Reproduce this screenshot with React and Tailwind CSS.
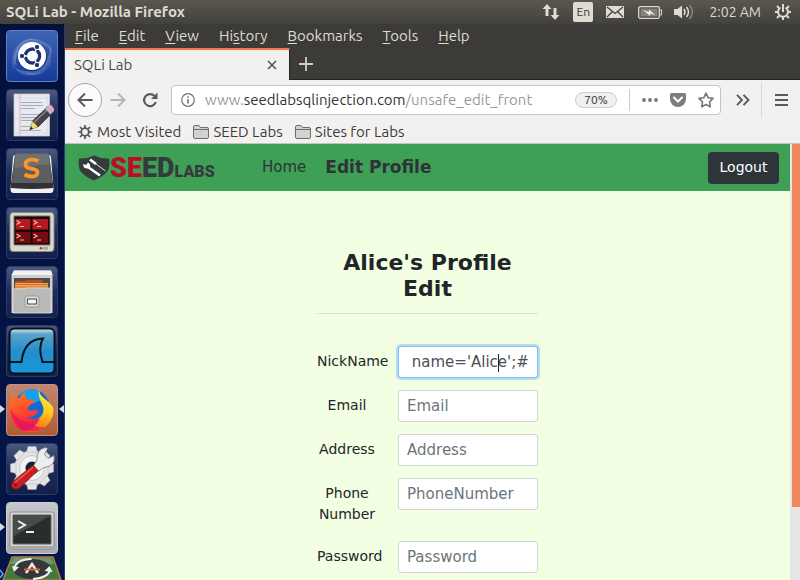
import React from "react";

const UI = "font-['Ubuntu','Noto_Sans','Open_Sans',sans-serif]";
const PAGE = "font-['DejaVu_Sans',sans-serif]";

function Tile({ label, className, children, marks }) {
  return (
    <button
      type="button"
      aria-label={label}
      className={`relative h-[52px] w-[52px] shrink-0 rounded-[4px] border ${className}`}
    >
      <svg viewBox="1 1 50 50" className="block h-[50px] w-[50px] rounded-[3px]">
        {children}
      </svg>
      {marks?.includes("l") && (
        <span className="absolute top-5 -left-[7px] border-y-[4px] border-l-[5px] border-y-transparent border-l-[#d9d9dd]" />
      )}
      {marks?.includes("r") && (
        <span className="absolute top-5 -right-[7px] border-y-[4px] border-r-[5px] border-y-transparent border-r-[#d9d9dd]" />
      )}
    </button>
  );
}

const NAVY = "border-[#2b3a68] bg-linear-to-b from-[#4b587f] via-[#1d2b57] to-[#13204b]";

function Launcher() {
  return (
    <nav
      aria-label="Launcher"
      className="flex w-[65px] shrink-0 flex-col gap-[7px] overflow-hidden border-r border-[#23407c] bg-linear-to-b from-[#04113a] to-[#03154a] pt-[6px] pl-[6px]"
    >
      <Tile label="Search your computer" className="border-[#5c80cc] bg-linear-to-b from-[#3f64b4] to-[#16399a]">
        <path d="M8 39C2 24 12 6 30 9c9 1 16 8 17 15C42 14 29 10 20 16 12 21 9 29 8 39Z" fill="#fff" opacity=".17" />
        <path d="M43 12c6 12 0 31-16 33-9 2-16-3-19-8 9 6 22 6 29-2 6-7 8-14 6-23Z" fill="#fff" opacity=".19" />
        <path d="M10 35C6 20 17 9 27 9M45 30C42 42 32 47 21 43" fill="none" stroke="#c6d6ff" strokeWidth="1" opacity=".3" />
        <circle cx="26.500" cy="27" r="14.500" fill="#0a1d50" opacity=".5" />
        <circle cx="26" cy="26" r="14" fill="#fff" />
        <circle cx="26.500" cy="26" r="7" fill="none" stroke="#20366c" strokeWidth="3.600" />
        <path d="M26.500 26 15 26M26.500 26 32.500 15.500M26.500 26 32.500 36.500" stroke="#fff" strokeWidth="1.500" />
        <circle cx="26.500" cy="26" r="5.300" fill="#fff" />
        {[[16, 26], [31, 17], [31, 35]].map(([x, y]) => (
          <circle key={`${x}-${y}`} cx={x} cy={y} r="2.700" fill="#20366c" stroke="#fff" strokeWidth="1" />
        ))}
      </Tile>

      <Tile label="Text Editor" className={NAVY}>
        <path d="M8 5h35.500v42H8z" fill="#e9eaf1" stroke="#c2c4ce" strokeWidth=".8" />
        <path d="M14 5v42" stroke="#f19a9a" strokeWidth=".8" />
        <path d="M41 5v42M9 9h34M9 30h34M9 44h34" stroke="#c8d2ef" strokeWidth=".7" />
        <path d="M15 13.500h21M15 16.500h22M15 19.500h14M15 25.500h19M15 28.500h16M15 31.500h12M15 37.500h10M15 41.500h20" stroke="#a2a4ac" strokeWidth=".9" />
        <path d="M26.500 32 40.500 19l5 5.500L32 38Z" fill="#454547" stroke="#1b1b1c" strokeWidth=".7" />
        <path d="m28.500 33 13-12.500" stroke="#838386" strokeWidth="1.500" />
        <path d="m26.500 32 5.500 6-8 2.500Z" fill="#f0dc70" stroke="#7b6b2a" strokeWidth=".5" />
        <path d="m25 37.500 2 2.300-3.800 1.400Z" fill="#222" />
        <path d="m39 20 3-3 5.500 5.500-3 3Z" fill="#babac3" stroke="#6b6b72" strokeWidth=".5" />
        <path d="m41.500 17 1.500-1.500q3 0 5 4.500v1.500L46.500 23Z" fill="#eaa0c8" />
      </Tile>

      <Tile label="Sublime Text" className={NAVY}>
        <path d="M7 9q.500-2 2-2h34q1.500 0 2 2l2.500 32q0 4-3 4h-37q-3 0-3-4Z" fill="#f1f1f1" />
        <path d="M9 7q.500-2 3-2h28q2.500 0 3 2l4 29v4q-21 2-42 0v-4Z" fill="#303132" />
        <path d="M9 7q.500-2 3-2h28q2.500 0 3 2l3 26H6Z" fill="#5c5e5f" />
        <path d="M9.500 6h33l1 10-35 4Z" fill="#85878a" opacity=".45" />
        <path d="M6 34h40" stroke="#8b8d8e" strokeWidth="1" />
        <path d="M32.500 13q-4-1.800-8-1.300-5 .9-5 4.700 0 3.300 6 4.300 6.500 1 6 4.300-.5 3.500-5.500 3.500-4 0-7.500-2" fill="none" stroke="#ff9528" strokeWidth="3.800" />
      </Tile>

      <Tile label="Terminator" className={NAVY}>
        <path d="M7 5.500h38q2.500 0 3 3V41q0 3.500-3 3.500H7Q4 44.500 4 41V8.500q.500-3 3-3Z" fill="#d8d8d0" stroke="#8b8b86" />
        <path d="M8 9h36v29H8Z" fill="#1b0605" stroke="#777770" strokeWidth="1" />
        <path d="M9.500 12h15v10.500h-15ZM26.500 12H42v10.500H26.500Z" fill="#b51a1f" />
        <path d="M9.500 25h15v11h-15ZM26.500 25H42v11H26.500Z" fill="#740b0e" />
        <path d="m10.500 13.500 3.500 2-3.500 2m3.500 2h4m9.500-6 3.500 2-3.500 2m3.500 2h4M10.500 27l3.500 2-3.500 2m3.500 2h4m9.500-6 3.500 2-3.500 2m3.500 2h4" fill="none" stroke="#efb5ae" strokeWidth="1.200" />
        <circle cx="35" cy="41.300" r="1.300" fill="#e12422" />
        <path d="M37.500 40.300h4v2h-4Z" fill="#b8b8b1" stroke="#8b8b86" strokeWidth=".6" />
      </Tile>

      <Tile label="Files" className={NAVY}>
        <path d="M8 4.500h37L46.500 9v38H5.500V9Z" fill="#cfcfcf" />
        <path d="M8 4.500h37L46.500 9h-41Z" fill="#f1f1f1" />
        <path d="M8 12h36v12H8Z" fill="#4c4c48" />
        <path d="M9.500 15h9l1-1h17v3h-27Z" fill="#b74e20" />
        <path d="M9 17h33v6H9Z" fill="#f0a55b" />
        <path d="M9 18.500h33M9 21h33" stroke="#d86d28" strokeWidth="1" />
        <path d="M7 23h11l2-1h25v25H7Z" fill="#b9b9b8" stroke="#dedede" strokeWidth=".8" />
        <rect x="19" y="30" width="14" height="11" rx="2" fill="#d9d9d9" stroke="#888" strokeWidth=".7" />
        <rect x="21.500" y="33" width="9" height="5" fill="#f4f4f4" stroke="#4b4b4b" strokeWidth="1" />
      </Tile>

      <Tile label="Wireshark" className={NAVY}>
        <defs>
          <linearGradient id="sea" x2="0" y2="1">
            <stop offset="0" stopColor="#d3e8f2" /><stop offset=".13" stopColor="#5ba2ca" />
            <stop offset=".5" stopColor="#238fcb" /><stop offset="1" stopColor="#1597dc" />
          </linearGradient>
        </defs>
        <rect x="3.500" y="3.500" width="45" height="45" rx="5" fill="url(#sea)" stroke="#091015" strokeWidth="2" />
        <path d="M4 37h11.500C17 23 24 14 37 13.500 33 20 34 29 36.500 37H48" fill="none" stroke="#07131a" strokeWidth="2" />
      </Tile>

      <Tile label="Firefox" marks="lr" className="border-[#c98d78] bg-linear-to-b from-[#c08774] to-[#ae5c35]">
        <defs>
          <linearGradient id="tail" x1=".6" y1="0" x2=".35" y2="1">
            <stop offset="0" stopColor="#fff13a" /><stop offset=".45" stopColor="#ffcb1f" />
            <stop offset=".75" stopColor="#ff8a17" /><stop offset="1" stopColor="#ff4a2c" />
          </linearGradient>
          <linearGradient id="fox" x1=".2" y1="0" x2=".5" y2="1">
            <stop offset="0" stopColor="#ff7a1c" /><stop offset=".55" stopColor="#ff4632" />
            <stop offset="1" stopColor="#ea1259" />
          </linearGradient>
        </defs>
        <circle cx="26" cy="23" r="17.500" fill="#1769cf" />
        <path d="M15 9q8-7 18-2l2 9-9 4-12-5Z" fill="#1aa0ea" />
        <path d="M33 3.500Q32 10 39 15q4 3 8 8 2 8-4 16-7 9-18 9Q12 48 7 38l17-2q9 0 12-5 3-5 0-11-5-9-3-16.500Z" fill="url(#tail)" />
        <path d="M7 9q0 4 3 5 2 0 4-.500Q16 10 19 8.500q-.500 4 2 7 5-.500 8 1.500-1 2.500-5 4-2 2-3 4.500 4 2 8 .500 3 0 3 2-4 6-11 5 6 4 13 1-4 9-13 13-10 0-15-10Q1 25 5 16q0-4 2-7Z" fill="url(#fox)" />
        <path d="M4.500 25q1 14 12.500 20 12 5 22-2-9 1-15-4-13-2-19.500-14Z" fill="#e6145c" opacity=".75" />
      </Tile>

      <Tile label="System Settings" className={NAVY}>
        <g fill="#e4e4e4" stroke="#b0b0b2" strokeWidth=".5">
          <circle cx="26" cy="25" r="17.500" />
          {[0, 45, 90, 135, 180, 225, 270, 315].map((a) => (
            <path key={a} d="M20.500 9 22 3.500h8L31.500 9Z" transform={`rotate(${a} 26 25)`} />
          ))}
        </g>
        <circle cx="26" cy="25" r="12.500" fill="#f2f2f2" stroke="#bbb" strokeWidth=".8" />
        <circle cx="26" cy="25" r="6.500" fill="#14203d" />
        <path d="M31 17q-1-11 9-12.500l1.500 1-3 6 3.500 4 6-3q2 11-10 12l-6 4-5-5Z" fill="#eceded" stroke="#77797d" strokeWidth=".8" />
        <path d="m27 22 5 5.500-19 18q-4 2-7-1-2-3 1-6Z" fill="#c82022" stroke="#7c1012" strokeWidth=".7" />
        <path d="M9 39.500 27 24.500" stroke="#ea5b56" strokeWidth="1.500" />
        <circle cx="9.500" cy="42" r="1.300" fill="#641012" />
      </Tile>

      <Tile label="Terminal" marks="l" className="border-[#d0d0d4] bg-linear-to-b from-[#c6c6cc] to-[#a8a8ae]">
        <rect x="4" y="10" width="44" height="37" rx="2" fill="#d4d4d2" stroke="#8b8b8c" />
        <path d="M4 44h44v3H4Z" fill="#a9a9a8" />
        <path d="M7 13h38v29H7Z" fill="#292e2d" stroke="#666" />
        <path d="M8 14h36L8 34Z" fill="#59605e" opacity=".6" />
        <path d="m12 19 7 4-7 4m8 3h8" fill="none" stroke="#eee" strokeWidth="2" />
      </Tile>

      <button type="button" aria-label="Software Updater" className="relative -mt-[5px] -ml-[6px] h-6 w-16 shrink-0">
        <svg viewBox="0 0 64 24" className="block h-6 w-16">
          <path d="M12 1h41l8 23H3Z" fill="#3f7a38" stroke="#b5794b" strokeWidth="1.500" />
          <path d="M14 2h37l3 6H10Z" fill="#83a578" opacity=".7" />
          <ellipse cx="32" cy="13" rx="19" ry="10" fill="#343838" />
          <path d="M14.500 12q2-8.500 17-9M50 14q-2 8-17 9" fill="none" stroke="#f1f1ee" strokeWidth="2" />
          <path d="m12 10 7 1-5 5ZM52.500 16l-8-1 5-5Z" fill="#f1f1ee" />
          <path d="m26 17 6-9 6 9" fill="none" stroke="#e8e8e6" strokeWidth="2.600" />
          <path d="M24 13.500h16" stroke="#e76b2e" strokeWidth="1.800" />
          <path d="m0 14 3 4-3 4" fill="none" stroke="#55aee8" strokeWidth="1.500" />
        </svg>
      </button>
    </nav>
  );
}

function TopPanel() {
  return (
    <header className="flex h-6 shrink-0 items-center justify-between bg-linear-to-b from-[#5b574d] to-[#42413c] pr-2 pl-[6px] text-[#dfdbd2]">
      <h1 className="text-[15px] leading-6 font-bold">SQLi Lab - Mozilla Firefox</h1>
      <div className="flex items-center">
        <svg viewBox="0 0 18 18" className="h-[18px] w-[18px]" fill="currentColor">
          <path d="M5 1 .5 6H3.500v7h3V6h3ZM13 17l4.500-5H14.500V5h-3v7h-3Z" />
        </svg>
        <span className="ml-[13px] flex h-5 w-5 items-center justify-center rounded-[2px] bg-[#dfdbd2] text-[12px] text-[#3c3b37]">En</span>
        <svg viewBox="0 0 18 12" className="ml-[13px] h-3 w-[18px]">
          <path d="M0 0h18v12H0Z" fill="#dfdbd2" />
          <path d="m1 1 8 6.500L17 1M1 11l5.500-5.500M17 11l-5.500-5.500" fill="none" stroke="#45433e" strokeWidth="1.300" />
        </svg>
        <svg viewBox="0 0 24 13" className="ml-[14px] h-[13px] w-6">
          <rect x=".7" y=".7" width="20.600" height="11.600" rx="1.500" fill="none" stroke="#dfdbd2" strokeWidth="1.300" />
          <path d="M2.500 2.500h17v8h-17Z" fill="#858279" />
          <path d="M22 4h1.500v5H22" fill="none" stroke="#dfdbd2" />
          <path d="m5 4 6 2V3.500L17 9l-5-1.500V10Z" fill="#f2eee5" />
        </svg>
        <svg viewBox="0 0 20 16" className="ml-[12px] h-4 w-5">
          <path d="M0 5h3.500L8 1.500v13L3.500 11H0Z" fill="#dfdbd2" />
          <path d="M10 5q2 3 0 6M12.500 3q4 5 0 10" fill="none" stroke="#dfdbd2" strokeWidth="1.500" />
          <path d="M15.500 1q6 7 0 14" fill="none" stroke="#888579" strokeWidth="1.500" />
        </svg>
        <time className="ml-[15px] text-[14px] leading-6 whitespace-nowrap">2:02 AM</time>
        <svg viewBox="0 0 18 18" className="ml-[13px] h-[18px] w-[18px]" fill="none" stroke="currentColor">
          <path d="M6.500 4.500a5 5 0 1 0 5 0" strokeWidth="2" />
          <path d="M9 1v8" strokeWidth="2" />
          <path d="m3 3 2 2m10-2-2 2M1 9h3m10 0h3M3 15l2-2m10 2-2-2M9 14v3" strokeWidth="2" />
        </svg>
      </div>
    </header>
  );
}

const MENUS = ["File", "Edit", "View", "History", "Bookmarks", "Tools", "Help"];

function MenuBar() {
  return (
    <nav aria-label="Menu bar" className="flex h-6 gap-5 bg-[#3c3b37] pl-[10px] text-[15px] leading-6 text-[#dfdbd2]">
      {MENUS.map((m) => {
        const at = m === "History" ? 2 : 0;
        return (
          <button key={m} type="button">
            {m.slice(0, at)}
            <span className="underline underline-offset-2">{m[at]}</span>
            {m.slice(at + 1)}
          </button>
        );
      })}
    </nav>
  );
}

function TabStrip() {
  return (
    <div className="flex h-8 border-b border-[#252420] bg-[#3c3b37]">
      <div className="-mb-px flex w-[225px] items-center justify-between border-t-2 border-r border-t-[#f07746] border-r-[#252420] bg-[#f2f1f0] pr-3 pl-[9px]">
        <span className="text-[15px] leading-5 text-[#4c4c4c]">SQLi Lab</span>
        <button type="button" aria-label="Close tab">
          <svg viewBox="0 0 10 10" className="h-[10px] w-[10px]"><path d="m1 1 8 8m0-8-8 8" stroke="#555" strokeWidth="1.600" /></svg>
        </button>
      </div>
      <button type="button" aria-label="New tab" className="ml-[9px]">
        <svg viewBox="0 0 14 14" className="h-[14px] w-[14px]"><path d="M7 0v14M0 7h14" stroke="#d0cdc5" strokeWidth="1.800" /></svg>
      </button>
    </div>
  );
}

function Folder() {
  return (
    <svg viewBox="0 0 16 14" className="h-[14px] w-4" fill="#d2d2d0" stroke="#6e6e6d">
      <path d="M.5 12V2q0-1.500 1.500-1.500h4L7.500 2.500H14q1.500 0 1.500 1.500v8q0 1.500-1.500 1.500H2Q.5 13.500.5 12ZM.5 4.500h15" />
    </svg>
  );
}

function Toolbar() {
  return (
    <div className="flex h-10 items-center bg-[#f2f1f0] pr-3 pl-[3px] text-[#5a5a59]">
      <button type="button" aria-label="Back" className="flex h-[34px] w-[34px] shrink-0 items-center justify-center rounded-full border border-[#a9a8a6] bg-[#fbfbfb]">
        <svg viewBox="0 0 16 16" className="h-4 w-4" fill="none" stroke="currentColor" strokeWidth="2"><path d="M15.500 8H1.500M8 1.500 1.500 8 8 14.500" /></svg>
      </button>
      <button type="button" aria-label="Forward" className="ml-2 text-[#b7b6b4]">
        <svg viewBox="0 0 16 16" className="h-4 w-4" fill="none" stroke="currentColor" strokeWidth="2"><path d="M.5 8h14M8 1.500 14.500 8 8 14.500" /></svg>
      </button>
      <button type="button" aria-label="Reload" className="ml-4">
        <svg viewBox="0 0 16 16" className="h-4 w-4" fill="none" stroke="currentColor" strokeWidth="2.200">
          <path d="M12.500 4A6 6 0 1 0 13.800 10" /><path d="M15.500.5V7H9Z" fill="currentColor" stroke="none" />
        </svg>
      </button>
      <div className="ml-[13px] flex h-[30px] min-w-0 flex-1 items-center rounded-[4px] border border-[#c5c3c0] bg-white pr-[6px] pl-[9px]">
        <svg viewBox="0 0 14 14" className="h-[14px] w-[14px] shrink-0" fill="none" stroke="#777">
          <circle cx="7" cy="7" r="6.300" strokeWidth="1.200" /><path d="M7 6v4.500M7 3.200v1.600" strokeWidth="1.600" />
        </svg>
        <span className="ml-[10px] min-w-0 flex-1 text-[15px] leading-7 whitespace-nowrap text-[#999]">
          www.<span className="text-[#333]">seedlabsqlinjection.com</span>/unsafe_edit_front
        </span>
        <button type="button" className="flex h-4 w-[42px] shrink-0 items-center justify-center rounded-full border border-[#cfcfcf] bg-[#f0f0f0] text-[12px] text-[#333]">70%</button>
        <span className="ml-3 h-[22px] w-px bg-[#ccc]" />
        <button type="button" aria-label="Page actions" className="ml-3">
          <svg viewBox="0 0 16 4" className="h-1 w-4" fill="#777"><circle cx="2" cy="2" r="1.900" /><circle cx="8" cy="2" r="1.900" /><circle cx="14" cy="2" r="1.900" /></svg>
        </button>
        <button type="button" aria-label="Save to Pocket" className="ml-3">
          <svg viewBox="0 0 16 14" className="h-[14px] w-4"><path d="M1.500 0h13Q16 0 16 1.500V6a8 8 0 0 1-16 0V1.500Q0 0 1.500 0Z" fill="#7d7d7d" /><path d="m4 4.500 4 4 4-4" fill="none" stroke="#fff" strokeWidth="2" strokeLinecap="round" /></svg>
        </button>
        <button type="button" aria-label="Bookmark this page" className="ml-3">
          <svg viewBox="0 0 16 16" className="h-4 w-4" fill="none" stroke="#777" strokeWidth="1.600" strokeLinejoin="round"><path d="m8 1.200 2.100 4.500 4.900.7-3.500 3.500.8 4.900L8 12.500l-4.300 2.300.8-4.900L1 6.400l4.900-.7Z" /></svg>
        </button>
      </div>
      <button type="button" aria-label="More tools" className="ml-[15px]">
        <svg viewBox="0 0 14 12" className="h-3 w-[14px]" fill="none" stroke="currentColor" strokeWidth="1.900"><path d="m1 .8 5 5.200-5 5.200M7.500.8l5 5.200-5 5.200" /></svg>
      </button>
      <span className="ml-[11px] h-[34px] w-px bg-[#d7d6d4]" />
      <button type="button" aria-label="Open menu" className="ml-[13px]">
        <svg viewBox="0 0 13 12" className="h-3 w-[13px]" stroke="currentColor" strokeWidth="2"><path d="M0 1h13M0 6h13M0 11h13" /></svg>
      </button>
    </div>
  );
}

function Bookmarks() {
  return (
    <div className="flex h-6 items-center gap-3 border-b border-[#c4c2bf] bg-[#f2f1f0] pl-[13px] text-[15px] leading-[21px] text-[#3c3c3c]">
      <button type="button" className="flex items-center gap-[5px]">
        <svg viewBox="0 0 14 14" className="h-[14px] w-[14px]" fill="none" stroke="#555">
          <circle cx="7" cy="7" r="3.800" strokeWidth="1.800" />
          <path d="M7 0v3M7 11v3M0 7h3M11 7h3M2 2l2 2M10 10l2 2M12 2l-2 2M4 10l-2 2" strokeWidth="1.700" />
        </svg>
        Most Visited
      </button>
      {["SEED Labs", "Sites for Labs"].map((t) => (
        <button key={t} type="button" className="flex items-center gap-1"><Folder />{t}</button>
      ))}
    </div>
  );
}

function SiteNav() {
  return (
    <nav className="flex h-[47px] items-center bg-[#3ea055] pr-[11px] pl-[13px] text-[#2d3339]">
      <a href="#home" aria-label="SEED Labs" className="flex w-[138px] items-center">
        <svg viewBox="0 0 32 26" className="h-[26px] w-8 shrink-0">
          <path d="M16 .5q7 3.500 15 3 1 7-1 12-4 6-14 10Q6 21.500 2 15.500 0 10.500 1 3.500q8 .5 15-3Z" fill="#343a3e" />
          <path d="m10 12 12 8.500M12 4.500l6 4.500" stroke="#fff" strokeWidth="2.600" />
          <path d="m18 9 9.500 7" stroke="#e4e4e4" strokeWidth="1" />
          <path d="m5 9 3 1 2-2.500q3 2 2 5-3 2-6 0Z" fill="#fff" />
        </svg>
        <span className="flex items-baseline font-['Roboto','Liberation_Sans',sans-serif] font-black">
          <span className="text-[27px] leading-[30px] text-[#b90f26]">SE<span className="text-[#343a3e]">ED</span></span>
          <span className="text-[16px] leading-5 text-[#343a3e]">LABS</span>
        </span>
      </a>
      <a href="#home" className="ml-[46px] text-[15px]">Home</a>
      <a href="#edit" aria-current="page" className="ml-[19px] text-[17px] font-bold">Edit Profile</a>
      <button type="button" className="ml-auto h-8 w-[71px] rounded-[4px] bg-[#2d353b] text-[14px] text-white">Logout</button>
    </nav>
  );
}

const FIELDS = [
  { id: "nick", label: "NickName", value: " name='Alice';#" },
  { id: "email", label: "Email", placeholder: "Email" },
  { id: "address", label: "Address", placeholder: "Address" },
  { id: "phone", label: "Phone Number", placeholder: "PhoneNumber" },
  { id: "password", label: "Password", placeholder: "Password", type: "password" },
];

function ProfileForm() {
  return (
    <form className="mx-auto w-[221px] pt-[59px]">
      <h2 className="text-center text-[22px] leading-[26px] font-bold text-[#212529]">Alice's Profile Edit</h2>
      <hr className="mt-[11px] mb-8 border-[#d9e3cb]" />
      <div className="flex flex-col gap-3">
        {FIELDS.map((f) => (
          <div key={f.id} className="flex items-start justify-between">
            <label htmlFor={f.id} className="w-[60px] pt-[5px] pb-1 text-center text-[14px] leading-[21px] text-[#212529]">{f.label}</label>
            <div className="relative w-[140px]">
              <input
                id={f.id}
                type={f.type ?? "text"}
                defaultValue={f.value}
                placeholder={f.placeholder}
                className={`block h-8 w-full rounded-[3px] border bg-white px-2 text-[15px] text-[#495057] placeholder:text-[#6c757d] ${
                  f.value ? "border-[#80bdff] ring-2 ring-[#b8dcee]" : "border-[#ced4da]"
                }`}
              />
              {f.value && <span className="absolute top-2 left-[100px] h-[18px] w-px bg-[#222]" />}
            </div>
          </div>
        ))}
      </div>
    </form>
  );
}

export default function App() {
  return (
    <div className={`flex h-screen flex-col overflow-hidden bg-[#04113a] ${UI}`}>
      <TopPanel />
      <div className="flex min-h-0 flex-1">
        <Launcher />
        <div className="flex min-w-0 flex-1 flex-col">
          <MenuBar />
          <TabStrip />
          <Toolbar />
          <Bookmarks />
          <div className="flex min-h-0 flex-1">
            <main className={`min-w-0 flex-1 overflow-hidden bg-[#f3ffe3] ${PAGE}`}>
              <SiteNav />
              <ProfileForm />
            </main>
            <div className="w-[10px] shrink-0 bg-[#e5e5e5] pl-[2px]">
              <div className="h-5/6 bg-[#f0875d]" />
            </div>
          </div>
        </div>
      </div>
    </div>
  );
}
